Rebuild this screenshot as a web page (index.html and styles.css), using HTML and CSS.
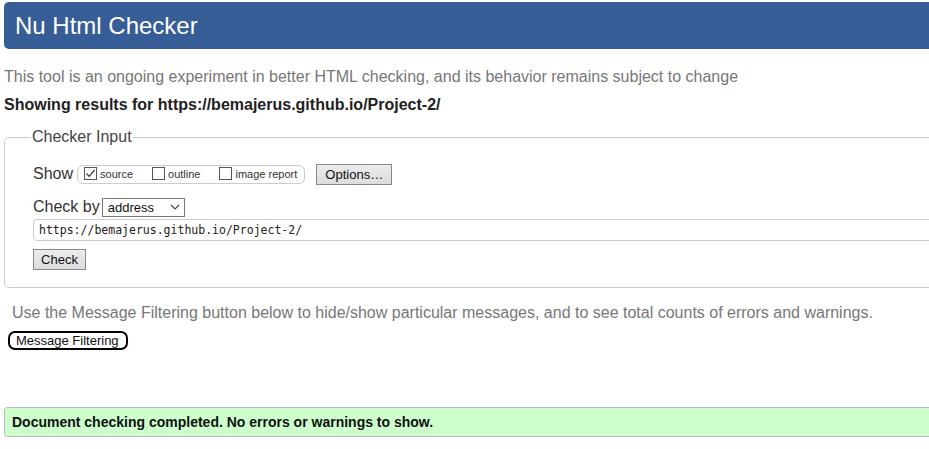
FILE: index.html
```html
<!DOCTYPE html>
<html>
<head>
<meta charset="utf-8">
<title>Nu Html Checker</title>
<link rel="stylesheet" href="styles.css">
</head>
<body>
<div class="page">
  <h1 class="banner">Nu Html Checker</h1>
  <p class="intro">This tool is an ongoing experiment in better HTML checking, and its behavior remains subject to change</p>
  <p class="showing">Showing results for https://bemajerus.github.io/Project-2/</p>
  <fieldset class="input-box">
    <legend class="legend">Checker Input</legend>
    <div class="row show-row">
      <span class="label">Show</span>
      <span class="group">
        <label class="opt"><span class="cb checked"><svg viewBox="0 0 13 13" width="13" height="13"><path d="M2.5 6.5 L5.2 9.3 L10.5 3" fill="none" stroke="#333" stroke-width="1.2"/></svg></span>source</label>
        <label class="opt"><span class="cb"></span>outline</label>
        <label class="opt"><span class="cb"></span>image report</label>
      </span>
      <span class="btn options">Options…</span>
    </div>
    <div class="row check-row">
      <span class="label">Check by</span>
      <span class="select">address<svg viewBox="0 0 10 6" width="10" height="6"><path d="M1 1 L5 5 L9 1" fill="none" stroke="#444" stroke-width="1.1"/></svg></span>
    </div>
    <div class="url">https://bemajerus.github.io/Project-2/</div>
    <div class="row"><span class="btn check">Check</span></div>
  </fieldset>
  <p class="filter-note">Use the Message Filtering button below to hide/show particular messages, and to see total counts of errors and warnings.</p>
  <span class="filter-btn">Message Filtering</span>
  <div class="success">Document checking completed. No errors or warnings to show.</div>
</div>
</body>
</html>
```
FILE: styles.css
```css
html, body {
  margin: 0;
  padding: 0;
  overflow: hidden;
  background: #fff;
}
body {
  font-family: "Liberation Sans", Arial, sans-serif;
  font-size: 16px;
  color: #222;
}
.page {
  width: 960px;
  padding: 2px 0 0 4px;
}
.banner {
  margin: 0;
  height: 47px;
  box-sizing: border-box;
  background: #365d95;
  color: #fff;
  font-weight: normal;
  font-size: 24px;
  line-height: 47px;
  padding-left: 11px;
  border-radius: 5px 0 0 5px;
}
.intro {
  margin: 18px 0 0 0;
  color: #777;
  line-height: 20px;
}
.showing {
  margin: 8px 0 0 0;
  font-weight: bold;
  color: #222;
  line-height: 20px;
}
.input-box {
  margin: 13px 0 0 0;
  border: 1px solid #ccc;
  border-radius: 5px;
  padding: 16px 0 16px 28px;
  height: 126px;
  box-sizing: content-box;
}
.legend {
  color: #444;
  padding: 0 1px;
  margin-left: -2px;
  font-size: 16px;
  line-height: 18px;
}
.row {
  display: flex;
  align-items: center;
}
.show-row {
  height: 22px;
  margin-top: 1px;
}
.label {
  color: #333;
  margin-right: 4px;
}
.group {
  display: inline-flex;
  align-items: center;
  border: 1px solid #ccc;
  border-radius: 6px;
  height: 17px;
  padding: 0 7px 0 6px;
  gap: 19px;
  font-size: 11px;
  color: #333;
}
.opt {
  display: inline-flex;
  align-items: center;
}
.cb {
  display: inline-block;
  width: 11px;
  height: 11px;
  border: 1px solid #555;
  background: #fff;
  margin-right: 3px;
  position: relative;
  top: -1px;
}
.cb svg {
  display: block;
  margin: -1px;
}
.btn {
  display: inline-block;
  background: linear-gradient(#ececec, #dcdcdc);
  border: 1px solid #888;
  font-size: 13px;
  color: #111;
  box-sizing: border-box;
  text-align: center;
}
.options {
  margin-left: 11px;
  width: 76px;
  height: 21px;
  line-height: 19px;
}
.check-row {
  margin-top: 12px;
  height: 20px;
}
.check-row .label {
  margin-right: 2px;
}
.select {
  display: inline-flex;
  align-items: center;
  justify-content: space-between;
  width: 83px;
  height: 19px;
  box-sizing: border-box;
  border: 1px solid #777;
  font-size: 13px;
  padding: 0 4px 0 5px;
  color: #111;
}
.url {
  margin-top: 2px;
  height: 22px;
  box-sizing: border-box;
  border: 1px solid #ccc;
  border-radius: 4px 0 0 4px;
  font-family: "DejaVu Sans Mono", "Liberation Mono", monospace;
  font-size: 11.5px;
  line-height: 20px;
  padding-left: 5px;
  color: #222;
}
.check {
  margin-top: 8px;
  width: 53px;
  height: 21px;
  line-height: 19px;
}
.filter-note {
  margin: 15px 0 0 8px;
  color: #777;
  line-height: 20px;
}
.filter-btn {
  display: inline-block;
  margin: 8px 0 0 4px;
  border: 2px solid #000;
  border-radius: 7px;
  padding: 0 7px 0 6px;
  font-size: 13px;
  line-height: 15px;
  color: #111;
  background: #fff;
}
.success {
  margin-top: 57px;
  height: 30px;
  box-sizing: border-box;
  background: #ccffcc;
  border: 1px solid #bbb;
  border-radius: 3px 0 0 3px;
  font-weight: bold;
  font-size: 14px;
  line-height: 28px;
  padding-left: 7px;
  color: #111;
}
```
